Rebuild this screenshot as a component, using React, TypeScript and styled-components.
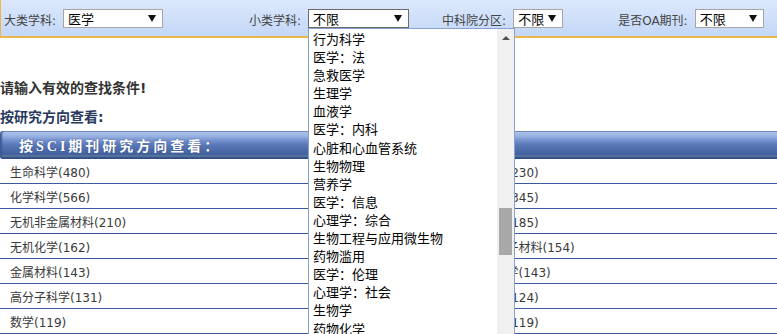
import React, { FC } from 'react';
import styled, { createGlobalStyle } from 'styled-components';

const GlobalStyle = createGlobalStyle`
  html, body {
    margin: 0;
    padding: 0;
    overflow: hidden;
    background: #fff;
  }
  body {
    font-family: "DejaVu Sans", "Noto Sans CJK SC", sans-serif;
    font-size: 12px;
    color: #333;
  }
`;

interface FilterType {
  label: string;
  value: string;
  width: number;
  offset: number;
  open?: boolean;
}

const FILTERS: FilterType[] = [
  { label: '大类学科:', value: '医学', width: 100, offset: 4 },
  { label: '小类学科:', value: '不限', width: 101, offset: 86, open: true },
  { label: '中科院分区:', value: '不限', width: 50, offset: 33 },
  { label: '是否OA期刊:', value: '不限', width: 69, offset: 55 },
];

const SUBJECTS: string[] = [
  '行为科学',
  '医学：法',
  '急救医学',
  '生理学',
  '血液学',
  '医学：内科',
  '心脏和心血管系统',
  '生物物理',
  '营养学',
  '医学：信息',
  '心理学：综合',
  '生物工程与应用微生物',
  '药物滥用',
  '医学：伦理',
  '心理学：社会',
  '生物学',
  '药物化学',
  '医学：研究与实验',
];

const FIELDS: [string, string][] = [
  ['生命科学(480)', '物理学：凝聚态物理(230)'],
  ['化学科学(566)', '纳米科学与纳米技术(345)'],
  ['无机非金属材料(210)', '材料科学：生物材料(185)'],
  ['无机化学(162)', '材料科学：陶瓷和电子材料(154)'],
  ['金属材料(143)', '物理：原子分子物理学(143)'],
  ['高分子科学(131)', '高分子材料与工程学(124)'],
  ['数学(119)', '应用数学与计算数学(119)'],
];

const Select: FC<{ filter: FilterType }> = ({ filter }) => (
  <SelectBox width={filter.width} open={filter.open}>
    <SelectValue>{filter.value}</SelectValue>
    <Caret />
    {filter.open ? (
      <Dropdown>
        <OptionList>
          {SUBJECTS.map(name => (
            <Option key={name}>{name}</Option>
          ))}
        </OptionList>
        <ScrollTrack>
          <ScrollButton>
            <UpCaret />
          </ScrollButton>
          <ScrollThumb offset={162} />
        </ScrollTrack>
      </Dropdown>
    ) : null}
  </SelectBox>
);

export default function App() {
  return (
    <>
      <GlobalStyle />
      <TopBar>
        {FILTERS.map(filter => (
          <FilterGroup key={filter.label} offset={filter.offset}>
            <FilterLabel>{filter.label}</FilterLabel>
            <Select filter={filter} />
          </FilterGroup>
        ))}
      </TopBar>
      <Notice>请输入有效的查找条件!</Notice>
      <SubHeading>按研究方向查看:</SubHeading>
      <TableHeader>
        <TableTitle>按SCI期刊研究方向查看：</TableTitle>
      </TableHeader>
      {FIELDS.map(([left, right]) => (
        <FieldRow key={left}>
          <FieldCell>{left}</FieldCell>
          <FieldCell>{right}</FieldCell>
        </FieldRow>
      ))}
    </>
  );
}

const TopBar = styled.div`
  display: flex;
  align-items: center;
  height: 38px;
  padding-top: 1px;
  box-sizing: border-box;
  background: linear-gradient(to bottom, #dce8fc 0%, #c3d7f7 100%);
  border-left: 1px solid #efb54a;
  border-bottom: 2px solid #ecb54c;
`;

const FilterGroup = styled.div<{ offset: number }>`
  display: flex;
  align-items: center;
  margin-left: ${p => p.offset}px;
  &:first-child {
    margin-left: ${p => p.offset - 1}px;
  }
`;

const FilterLabel = styled.span`
  color: #444;
  font-size: 12px;
  margin-right: 7px;
  padding-top: 2px;
  white-space: nowrap;
`;

const SelectBox = styled.div<{ width: number; open?: boolean }>`
  position: relative;
  display: flex;
  align-items: center;
  width: ${p => p.width}px;
  height: 19px;
  box-sizing: border-box;
  background: #fff;
  border: 1px solid ${p => (p.open ? '#6b6b6b' : '#a6a6a6')};
  font-family: "Noto Sans CJK SC", sans-serif;
  font-size: 13px;
  color: #000;
`;

const SelectValue = styled.span`
  flex: 1;
  padding-left: 4px;
  line-height: 17px;
`;

const Caret = styled.span`
  width: 0;
  height: 0;
  margin-right: 6px;
  border-left: 4px solid transparent;
  border-right: 4px solid transparent;
  border-top: 7px solid #111;
`;

const Dropdown = styled.div`
  position: absolute;
  top: 18px;
  left: -1px;
  z-index: 10;
  display: flex;
  width: 207px;
  height: 320px;
  box-sizing: border-box;
  background: #fff;
  border: 1px solid #86a0d2;
  overflow: hidden;
`;

const OptionList = styled.div`
  flex: 1;
  padding-top: 1px;
`;

const Option = styled.div`
  height: 18.1px;
  line-height: 18px;
  padding-left: 4px;
  font-size: 13px;
  color: #000;
  white-space: nowrap;
`;

const ScrollTrack = styled.div`
  display: flex;
  flex-direction: column;
  align-items: center;
  width: 17px;
  background: #f0f0f0;
`;

const ScrollButton = styled.div`
  display: flex;
  align-items: center;
  justify-content: center;
  width: 17px;
  height: 17px;
`;

const UpCaret = styled.span`
  width: 0;
  height: 0;
  border-left: 4px solid transparent;
  border-right: 4px solid transparent;
  border-bottom: 4px solid #505050;
`;

const ScrollThumb = styled.div<{ offset: number }>`
  width: 13px;
  height: 47px;
  margin-top: ${p => p.offset}px;
  background: #a8a8a8;
`;

const Notice = styled.div`
  margin-top: 40px;
  line-height: 20px;
  font-size: 14px;
  font-weight: bold;
  color: #333;
`;

const SubHeading = styled.div`
  margin-top: 9px;
  line-height: 20px;
  font-size: 14px;
  font-weight: bold;
  color: #283a5e;
`;

const TableHeader = styled.div`
  display: flex;
  align-items: center;
  margin-top: 4px;
  height: 28px;
  border-radius: 3px 0 0 3px;
  box-shadow: inset 3px 0 2px -1px #3f5893;
  background: linear-gradient(
    to bottom,
    #3f5a95 0px,
    #a9c0e9 1px,
    #9cb4e2 5px,
    #7692cf 9px,
    #5a77b6 14px,
    #4a67a6 20px,
    #425f9d 24px,
    #6b8a98 25px,
    #3a5792 26px,
    #2d4a88 28px
  );
`;

const TableTitle = styled.span`
  padding-left: 19px;
  font-family: "Liberation Serif", "Noto Sans CJK SC", serif;
  font-size: 14px;
  font-weight: bold;
  letter-spacing: 3px;
  color: #fff;
  text-shadow: 0 0 1px #2d467e;
`;

const FieldRow = styled.div`
  display: grid;
  grid-template-columns: 1fr 1fr;
  height: 25px;
  box-sizing: border-box;
  border-bottom: 1px solid #3b5a9c;
`;

const FieldCell = styled.div`
  display: flex;
  align-items: center;
  padding-left: 10px;
  font-size: 12px;
  color: #3a3a3a;
  white-space: nowrap;
`;
